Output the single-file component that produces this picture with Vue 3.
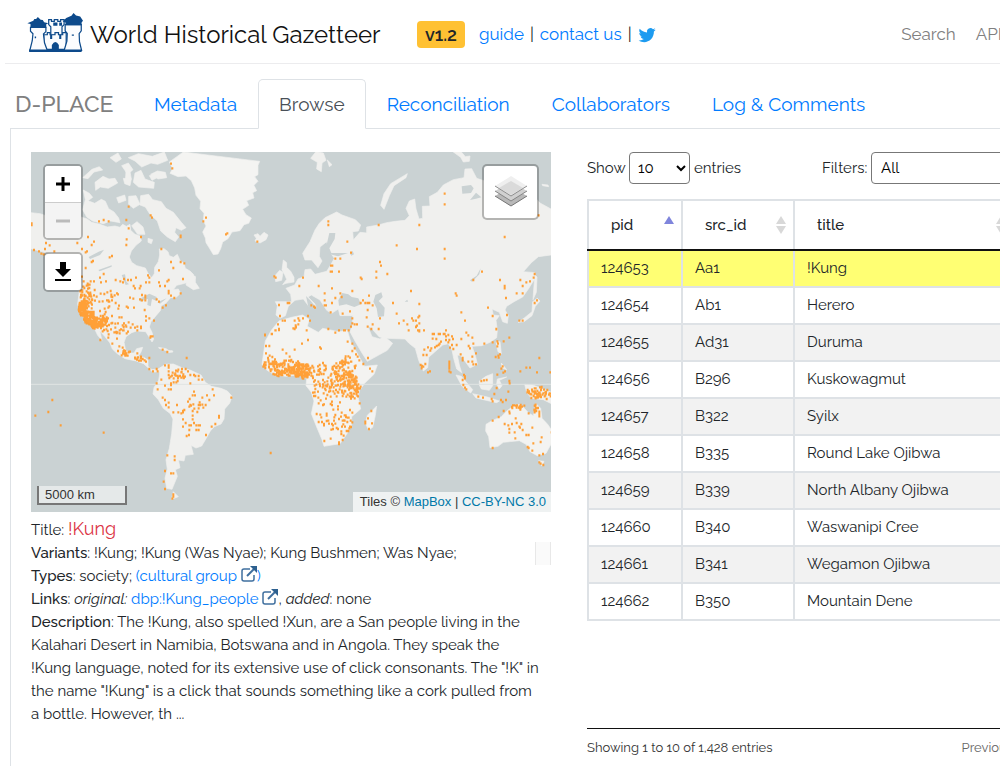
<script setup>
import { ref } from 'vue'

const tabs = ['Metadata', 'Browse', 'Reconciliation', 'Collaborators', 'Log & Comments']
const active = ref('Browse')
const pageSize = ref('10')
const filter = ref('All')
const selected = ref('124653')

const rows = [
  ['124653', 'Aa1', '!Kung'],
  ['124654', 'Ab1', 'Herero'],
  ['124655', 'Ad31', 'Duruma'],
  ['124656', 'B296', 'Kuskowagmut'],
  ['124657', 'B322', 'Syilx'],
  ['124658', 'B335', 'Round Lake Ojibwa'],
  ['124659', 'B339', 'North Albany Ojibwa'],
  ['124660', 'B340', 'Waswanipi Cree'],
  ['124661', 'B341', 'Wegamon Ojibwa'],
  ['124662', 'B350', 'Mountain Dene'],
]

// Places, grouped by map quadrant: [dx, dy, "x,y x,y ..."]
const quadrants = [
  [0, 0, '453,56 457,70 558,218 550,229 622,265 618,268 712,290 326,185 319,225 392,211 396,218 237,229 251,225 266,229 326,250 363,276 482,272 482,276 320,283 319,300 204,276 222,290 215,300 172,294 186,312 201,319 197,322 276,333 269,337 219,348 215,351 424,312 453,351 482,351 493,355 460,369 417,376 489,402 446,405 442,409 384,391 388,398 388,412 378,412 417,412 435,423 420,423 446,438 446,445 482,445 453,452 463,459 410,463 417,470 438,481 428,488 348,398 333,405 324,405 312,402 287,405 309,412 301,409 251,387 240,398 258,409 243,412 222,409 212,409 197,369 186,395 191,409 272,438 294,448 291,445 287,474 276,466 341,423 345,430 359,430 362,423 366,450 376,452 376,458 376,466 360,463 366,466 340,461 330,458 320,485 324,488 342,488 374,495 378,514 388,520 402,527 378,527 363,549 352,545 345,548 338,538 312,535 305,517 298,517 294,535 276,513 78,294 89,301 75,312 42,315 57,319 64,326 103,319 71,328 35,235 35,240 763,394 767,398 777,480 803,474 808,474 838,423 780,513 788,527 795,527 774,538 777,552 767,556 756,567 835,520 838,527 827,541 824,552 735,569'],
  [810, 0, '464,146 464,178 115,229 115,240 266,240 388,240 172,290 183,323 320,301 381,312 464,312 464,341 644,276 746,211 136,341 151,341 270,351 273,362 123,362 127,362 122,380 126,380 147,380 259,380 292,387 259,398 212,398 215,402 576,380 550,405 630,405 39,398 28,423 86,423 126,430 104,445 151,445 155,456 136,459 104,466 126,474 187,438 104,481 108,481 122,502 64,481 72,485 75,488 54,513 60,527 39,520 25,520 28,527 14,527 25,538 18,546 14,552 50,556 115,552 136,563 147,556 162,556 176,556 158,506 180,499 187,520 187,535 194,538 201,538 183,545 237,452 219,466 212,474 226,474 233,474 238,474 248,481 233,495 230,517 233,545 248,538 244,552 266,552 309,474 363,438 388,477 320,506 270,520 341,527 327,535 352,538 366,520 370,527 378,527 385,517 388,513 381,542 378,546 388,535 384,556 402,556 388,559 497,445 500,452 514,502 525,527 468,556 432,567 450,567 464,567 529,563 594,488 608,513 619,552 651,510 648,459 644,423 644,430 698,423 680,445 698,445 691,405 709,412 720,409 731,398 734,387 741,466 734,474 688,527 698,527'],
  [0, 540, '241,45 252,15 266,28 265,38 291,41 277,56 294,78 298,64 308,68 316,78 352,85 388,99 378,110 374,106 363,107 388,132 399,139 410,132 413,139 428,74 442,81 500,99 392,34 398,34 391,38 324,20 320,25 345,8 363,5 352,16 435,121 446,121 446,128 446,139 446,150 424,164 410,175 413,193 446,193 453,193 453,175 453,180 435,182 486,132 497,132 504,139 511,150 511,175 522,150 526,153 536,153 536,164 547,164 578,193 582,211 561,211 547,218 568,225 557,240 522,200 518,211 525,211 511,240 508,245 536,240 540,240 547,239 550,248 536,250 532,261 518,258 518,272 518,283 522,294 513,301 508,301 497,294 489,305 489,283 489,258 489,262 484,265 475,262 460,262 471,240 438,240 446,233 435,225 428,218 446,247 529,301 536,301 540,301 529,315 536,315 508,315 507,330 500,333 558,330 575,305 586,297 597,273 597,278 634,218 442,391 464,394 464,405 435,438 453,445 460,445 431,470 435,492 460,508 460,515 457,521 97,225 85,261 46,272 122,301 251,323 752,384 738,63 748,63 738,85 788,74 799,85 824,74 809,95 777,15 766,16 755,27 735,31 820,10 827,8'],
  [810, 540, '14,12 50,16 54,45 36,56 14,74 90,67 93,71 115,12 136,23 162,16 165,16 187,56 173,50 187,78 194,70 198,88 203,95 208,106 234,99 220,117 240,131 247,139 209,235 208,191 212,185 226,290 226,295 246,295 237,312 234,280 244,258 86,235 80,267 86,291 103,348 122,341 147,352 147,357 158,345 178,310 180,305 170,318 165,305 126,297 115,287 180,255 187,263 356,16 388,16 378,5 403,74 414,67 424,70 421,77 435,67 440,63 410,90 400,90 446,60 453,50 449,56 428,27 428,41 439,42 446,27 461,27 468,34 475,30 486,34 489,42 478,45 468,45 475,52 480,68 486,60 500,60 490,72 478,110 478,117 478,124 478,131 478,139 482,142 392,120 396,123 400,125 395,130 406,117 414,142 420,139 512,88 518,99 518,106 535,110 547,110 550,118 558,118 558,85 547,95 536,63 540,70 529,23 535,31 547,38 550,56 514,42 583,56 608,52 619,13 622,49 624,56 622,64 641,49 658,38 630,88 625,92 626,98 617,96 638,124 634,131 645,139 640,143 622,149 659,175 658,168 620,189 613,207 655,200 748,99 709,128 720,128 691,139 741,142 781,142 522,150 525,154 525,160 518,165 520,180 525,188 529,193 574,168 582,166 590,165 565,215 579,218 605,222 608,229 633,225 638,231 648,225 608,287 626,276 641,258 658,260 659,265 691,254 716,265 748,260 748,267 748,274 608,369 644,297 655,301 658,312 666,297 677,280 680,294 688,305 694,297 698,315 690,308 709,330 716,330 676,340 727,308 755,337 752,351 730,355 713,366 716,369 727,377 748,391 759,387 748,412 752,416 760,420 658,323 674,322 785,322'],
]

// Dense areas: [centre x, centre y, radius x, radius y, count]
const clusters = [
  [188, 492, 13, 24, 80], [207, 518, 16, 20, 80], [232, 530, 28, 22, 70], [200, 450, 20, 38, 50], [245, 485, 55, 55, 50],
  [275, 542, 60, 26, 34], [222, 540, 10, 12, 20], [318, 625, 18, 10, 16], [355, 640, 14, 8, 10], [470, 693, 26, 20, 26], [520, 790, 30, 40, 8],
  [750, 655, 22, 27, 36], [805, 668, 50, 24, 80], [848, 675, 38, 24, 75], [795, 685, 38, 10, 26], [855, 690, 14, 12, 22], [910, 690, 50, 40, 50],
  [976, 680, 34, 48, 70], [985, 720, 30, 40, 65], [1000, 730, 20, 36, 40], [925, 745, 48, 40, 45], [940, 815, 42, 40, 28],
  [970, 840, 28, 34, 16], [1552, 742, 32, 20, 46], [1590, 758, 14, 14, 12], [1494, 786, 22, 8, 18], [1548, 790, 8, 15, 10],
]

let seed = 41
const rnd = () => {
  seed = (seed * 16807) % 2147483647
  return seed / 2147483647
}
const dots = []
for (const [dx, dy, list] of quadrants) {
  for (const p of list.split(' ')) {
    const [x, y] = p.split(',').map(Number)
    dots.push([x + dx, y + dy])
  }
}
for (const [cx, cy, rx, ry, n] of clusters) {
  for (let i = 0; i < n; i++) {
    const a = rnd() * Math.PI * 2
    const r = Math.sqrt(rnd())
    dots.push([Math.round(cx + Math.cos(a) * r * rx), Math.round(cy + Math.sin(a) * r * ry)])
  }
}
const dotPath = dots.map(([x, y]) => `M${x - 3},${y}h6`).join('')
</script>

<template>
  <div class="page">
    <header class="top">
      <svg class="logo" viewBox="0 0 160 120" aria-label="Castle logo">
        <g fill="#fbfcfe" stroke="#0d4a8b" stroke-width="3.500">
          <path d="M62 22h8v5h8v-5h10v5h8v-5h10v14l-6 6v24H68V42l-6-6z" />
          <path d="M48 65h10v-6h8v6h14v-6h10v6h12v-6h10v48H48z" />
          <path d="M10 44h44v12l-7 7 3 25 8 22H8l7-28 2-20-7-7z" />
          <path d="M109 36h46v18l-6 8 1 23 6 25h-50l8-27 1-22-6-7z" />
        </g>
        <g fill="#0d4a8b">
          <path d="M1 32l17-7 3-5h5l5-6 8 8 6 1 4 6 12 3-6 3v11H10V34z" />
          <path d="M102 27l10-10 15-6 6-8 7 7 12 3 8 12-4 5v8h-46v-8z" />
          <path d="M71 110V94q10-16 20 0v16zM75 30h12v9H75zM92 30h8v9h-8zM66 66h6v11h-6zM92 66h6v11h-6zM22 70h4v5h-4zM128 64h6v4h-6zM6 107h150v7H6z" />
        </g>
      </svg>
      <a class="brand" href="#">World Historical Gazetteer</a>
      <span class="version">v1.2</span>
      <div class="links">
        <a href="#">guide</a><span>|</span><a href="#">contact us</a><span>|</span>
        <a href="#" class="tw" aria-label="Twitter">
          <svg viewBox="0 0 24 24"><path fill="#1d9bf0" d="M23.6 4.9c-.8.4-1.7.6-2.7.8 1-.6 1.7-1.5 2.1-2.6-.9.5-1.9.9-3 1.1a4.7 4.7 0 0 0-8 4.3C8.100 8.300 4.700 6.400 2.300 3.600c-1.300 2.200-.6 4.900 1.500 6.300-.8 0-1.500-.2-2.100-.6 0 2.300 1.600 4.200 3.800 4.700-.7.2-1.400.2-2.100.1.600 1.900 2.300 3.200 4.400 3.300A9.500 9.500 0 0 1 .8 19.300c9.300 5.800 20.600-.3 20.400-11.900.9-.7 1.700-1.500 2.400-2.500z" /></svg>
        </a>
      </div>
      <nav class="menu"><a href="#">Search</a><a href="#">API</a></nav>
    </header>

    <div class="tabs">
      <h1>D-PLACE</h1>
      <button v-for="t in tabs" :key="t" type="button" :class="{ on: t === active }" @click="active = t">{{ t }}</button>
    </div>

    <main class="body">
      <section class="left">
        <div class="map">
          <svg class="world" viewBox="33 21 1560 1080" preserveAspectRatio="xMidYMid slice" aria-label="World map">
            <rect x="33" y="21" width="1560" height="1080" fill="#cad2d3" />
            <g fill="#f0f0ee" stroke="#f0f0ee" stroke-width="2" stroke-linejoin="round">
              <!-- North America -->
              <path d="M33 203L60 206 90 216 150 222 180 215 202 222 215 232 240 238 262 246 285 243 300 247 308 238 319 244 330 238 332 256 345 268 362 274 364 288 348 301 334 318 328 336 335 352 350 362 376 369 384 385 395 398 403 386 404 367 415 350 419 330 418 312 432 311 444 320 448 332 460 337 472 328 480 346 492 355 496 370 510 378 520 388 526 400 510 410 490 416 470 421 460 434 475 432 482 445 467 458 452 458 438 474 424 482 421 497 408 512 393 530 388 546 396 562 401 583 396 591 386 574 377 560 350 558 335 563 318 575 312 592 316 612 327 624 342 624 350 611 368 607 363 621 354 635 371 637 384 645 384 664 396 674 414 672 422 668 417 681 398 681 386 670 371 656 349 648 315 641 292 626 277 612 270 594 254 574 239 557 246 586 233 571 225 554 208 535 193 520 180 501 173 478 178 438 186 402 175 374 140 348 103 330 75 322 50 316 33 311z" />
              <!-- Arctic archipelago -->
              <path d="M190 135l18 10 10 12-14 10 20 8 20-12 12 6 10 22 16 10 14 18 4 14-28-5-22 8-32-8-18-12-12-22 8-30zM188 98l28-25 22-8 10 10-26 6-18 20zM225 112l24-18 18 8 18-2 8 14-28 16-24-4-14 10zM270 38l24-14 10 18-16 10zM325 38l30-12 42 8 36-13 10 25-30 12-20-4-28 12-20-18zM305 62l20-8 14 20-16 14zM318 78l12 2 4 22-18 8zM345 84l18-8 12 26 28 10-2 18-45-4-16-14zM388 92l12-4 8 12-12 6zM310 100l24 2-4 20-16-6zM290 158l24-8 4 16-22 8zM326 154l22-2 12 26-20 12-14-12zM362 152l24-4 12 16 26 6 14 20 22 12 24 30 14 16-14 8-16-8-4 14 12 14-10 14-24-14-20-18-10-30-22-20-14-22-16-6zM335 242l16-12 18 16 6 22-22 0zM384 280l14 4-4 12-10-4zM392 88l20 -10 24 4 4 16-26 4zM502 402l24-8 0 18 12 18-18 4-22-14z" />
              <!-- Greenland and Iceland -->
              <path fill="#f4f4f2" d="M490 21l-28 20-14 10 10 20-8 14 24 10 24-2 16 14 10 22 4 22 14 18-2 22 12 14-2 22 8 16-10 18 8 18 2 14 10 16 12 20 14-2 8-16 6-20 16-10 12-20 24-4 12-18 14-4 8-16-16-10-10-16 18-12-6-14 22-8-4-16 12-6-8-16 12-12-10-14 10-6 0-28 5-12z" />
              <path d="M702 270l12-4 6 8 12-12 12 8-6 14-18 10-15-6 4-8z" />
              <!-- British Isles -->
              <path d="M790 345l10 8 0 14 12 12 10 18 0 14-24 4-10 4 12-16-6-14-8-14zM765 392l14-16 10 6-4 24-18 4z" />
              <!-- Caribbean -->
              <path d="M460 1040l15 15-20 8zM416 607l22 4 12 8-3 1-30-10zM443 617l14 0 2 4-16 2z" />
              <!-- South America -->
              <path d="M418 670L436 658 460 657 486 668 512 676 543 690 556 712 574 724 603 730 622 738 636 754 629 775 614 792 612 822 603 837 583 845 571 858 558 881 545 903 528 909 513 901 520 928 496 931 492 948 475 945 480 968 466 974 472 994 456 1033 440 1030 435 999 442 973 438 944 448 910 455 866 459 822 451 806 430 790 415 764 399 747 402 728 416 706 419 687z" />
              <g transform="translate(810 0)">
                <!-- Europe and Asia -->
                <path d="M-42 510L-38 482-44 470-10 470 5 470 2 448-12 430 14 420 24 402 42 395 45 374 62 372 75 388 110 379 122 360 133 340 118 318 110 290 90 306 88 334 96 348 84 368 65 345 45 345 38 325 60 290 75 255 88 235 105 218 140 201 156 210 196 224 212 240 205 258 188 260 190 285 210 262 230 264 230 246 265 240 290 233 316 229 345 226 358 212 348 190 358 168 374 162 378 192 387 222 398 220 397 184 420 183 418 155 442 142 460 120 490 104 522 98 525 72 545 71 560 100 620 120 700 120 750 174 783 192 783 330 745 335 724 353 700 380 735 383 732 405 715 432 698 456 672 470 650 484 645 495 655 512 652 535 638 530 628 502 606 492 610 510 628 512 618 526 622 556 620 578 600 592 575 602 546 604 557 635 562 658 540 669 526 650 512 632 502 630 508 660 515 683 500 672 491 640 486 615 475 596 458 600 435 620 416 637 413 668 400 678 386 646 376 610 356 594 345 582 290 580 268 576 248 554 232 540 246 575 270 582 282 574 308 595 292 616 232 649 216 624 196 590 180 560 188 540 188 512 150 512 145 492 125 505 110 496 90 465 64 450 54 456 82 484 64 494 40 462 15 466-5 484-14 512-30 520z" />
                <!-- Africa and Madagascar -->
                <path fill="#f3f3f1" d="M-32 527L5 517 38 510 58 523 52 544 85 562 98 550 145 560 172 556 182 590 200 622 216 650 224 664 262 660 252 688 224 715 208 737 205 758 212 792 185 815 185 840 170 868 150 896 102 904 96 884 80 846 64 806 72 768 64 742 48 722 50 700 28 689-12 694-46 690-70 675-84 658-80 630-74 588-56 556-40 536zM248 795l12-12-4 28-8 36-12 8-10-20 6-24z" />
                <!-- Arctic islands -->
                <path d="M282 193l-10-12 10-35 20-30 50-30-4 12-36 24-14 30zM62 40l16-20 22 4 8 22-12 8-2 26-14-8 2-20zM490 21l24 0 12 14 14-2-2 16-18 2-8-14zM112 45l14 14-8 6zM756 118l18 2 2 5-18-3z" />
                <!-- Japan, Sakhalin, south-east Asian islands -->
                <path d="M728 470l14-10 8 8-14 16-10 28-24 18-18 2 20-14 22-18zM735 390l6 6-2 46-10 22 2-30zM498 690l16 4 34 40-6 10-26-20zM568 708l20-14 20-8 0 36-10 14-24-4-6-12zM548 746l44 10 36 12-8 5-62-14zM622 702l28-6-22 10 8 16-8 10-8-14zM704 718l24 2 22 8 34 14 0 34-24-12-36-4-14-18zM618 590l12 0 4 36-10-6zM634 654l16 20-14-6z" />
                <!-- Australia -->
                <path fill="#f3f3f1" d="M588 838L606 827 634 815 650 798 672 782 690 778 705 792 716 804 730 812 738 776 752 790 756 820 773 838 784 854 784 896 768 925 742 932 720 920 708 898 688 887 640 892 624 904 600 908 596 875 587 858zM746 947l16 2-6 14z" />
              </g>
            </g>
            <!-- Inland waters -->
            <g fill="#cad2d3">
              <path d="M206 336l30-16 16-6-12 16-30 12zM235 375l40-14 0 4-36 14zM305 390l10-2 4 22 8 8-10 2zM358 462l30-16 22 10 0 12-14-6-4 22-10-4 2-18-24 8zM412 472l28-12-20 16z" />
              <g transform="translate(810 0)">
                <path d="M145 466l12-22 18 4 10 8 20 4 8 18-20 8-24-8-22 4zM256 450l18-8 4 14-12 12 18 20-2 26-18 2-4-26-10-20zM540 406l20-14 12-22-4 18-22 22zM515 124l28-4 8 10-8 14-26 2zM540 165l18-22 16 14-16 4zM118 264l18 0-2 18-16 28 6 14 50 0-30 10-38-10 6-34z" />
                <path d="M48 453l12 12 26 32-12-20 20 12 24 20-12 10-30-2-16-8zM180 326l8-8 4 10-8 4zM344 470l8-6 2 6z" />
              </g>
            </g>
            <path d="M33 718H1593" stroke="#e0e4e3" stroke-width="3" />
            <path :d="dotPath" stroke="#ff9a2c" stroke-width="7" stroke-opacity=".94" fill="none" />
          </svg>
          <div class="ctl">
            <div class="box zoom">
              <button type="button" aria-label="Zoom in"><svg viewBox="0 0 16 16"><path d="M8 1v14M1 8h14" stroke="#000" stroke-width="3" /></svg></button>
              <button type="button" aria-label="Zoom out" disabled><svg viewBox="0 0 16 16"><path d="M1 8h14" stroke="#bbb" stroke-width="3" /></svg></button>
            </div>
            <div class="box">
              <button type="button" aria-label="Download"><svg class="dl" viewBox="0 0 16 20"><path d="M5 0h6v7h5l-8 8-8-8h5zM0 17h16v2H0z" /></svg></button>
            </div>
          </div>
          <button class="box layers" type="button" aria-label="Layers">
            <svg viewBox="0 0 32 32">
              <path d="M0 20l16 10 16-10-16-9z" fill="#b8b8b8" /><path d="M0 20l16 10 16-10" fill="none" stroke="#747474" />
              <path d="M0 15l16 10 16-10-16-9z" fill="#d0d0d0" /><path d="M0 15l16 10 16-10" fill="none" stroke="#858585" />
              <path d="M0 10L16 0l16 10-16 10z" fill="#efefef" /><path d="M4 12l12-7 12 7-12 7z" fill="#dadada" /><path d="M0 10l16 10 16-10" fill="none" stroke="#8c8c8c" />
            </svg>
          </button>
          <div class="scale">5000 km</div>
          <div class="attr">Tiles © <a href="#">MapBox</a> | <a href="#">CC-BY-NC 3.0</a></div>
        </div>

        <div class="detail">
          <p class="title">Title: <span class="red">!Kung</span></p>
          <p class="variants"><span><b>Variants</b>: !Kung; !Kung (Was Nyae); Kung Bushmen; Was Nyae;</span><i class="thumb"></i></p>
          <p><b>Types</b>: society; <a href="#">(cultural group <svg class="ext" viewBox="0 0 16 16"><path d="M9 3H3a2 2 0 0 0-2 2v8a2 2 0 0 0 2 2h8a2 2 0 0 0 2-2V9" /><path d="M6 10l8-8" stroke-width="2" /><path class="tip" d="M9 0h7v7z" /></svg>)</a></p>
          <p><b>Links</b>: <em>original:</em> <a href="#">dbp:!Kung_people <svg class="ext" viewBox="0 0 16 16"><path d="M9 3H3a2 2 0 0 0-2 2v8a2 2 0 0 0 2 2h8a2 2 0 0 0 2-2V9" /><path d="M6 10l8-8" stroke-width="2" /><path class="tip" d="M9 0h7v7z" /></svg></a>, <em>added</em>: none</p>
          <p><b>Description</b>: The !Kung, also spelled !Xun, are a San people living in the<br>Kalahari Desert in Namibia, Botswana and in Angola. They speak the<br>!Kung language, noted for its extensive use of click consonants. The "!K" in<br>the name "!Kung" is a click that sounds something like a cork pulled from<br>a bottle. However, th ...</p>
        </div>
      </section>

      <section class="right">
        <div class="tools">
          <label>Show <select v-model="pageSize" class="size"><option>10</option><option>25</option><option>50</option></select> entries</label>
          <label class="filters">Filters: <select v-model="filter" class="filter"><option>All</option></select></label>
        </div>
        <div class="scroll">
          <table>
            <colgroup><col class="c1"><col class="c2"><col></colgroup>
            <thead>
              <tr>
                <th v-for="(h, i) in ['pid', 'src_id', 'title']" :key="h" scope="col">
                  <div class="head"><span>{{ h }}</span>
                    <svg viewBox="0 0 10 18"><path d="M0 8L5 0l5 8z" :fill="i ? '#d8d8d8' : '#7f85dc'" /><path v-if="i" d="M0 10l5 8 5-8z" fill="#d8d8d8" /></svg>
                  </div>
                </th>
              </tr>
            </thead>
            <tbody>
              <tr v-for="r in rows" :key="r[0]" :class="{ sel: r[0] === selected }" @click="selected = r[0]">
                <td v-for="c in r" :key="c">{{ c }}</td>
              </tr>
            </tbody>
          </table>
        </div>
        <footer class="foot"><span>Showing 1 to 10 of 1,428 entries</span><a href="#">Previous</a></footer>
      </section>
    </main>
  </div>
</template>

<style>
body { margin: 0; background: #fff; overflow: hidden; }
</style>

<style scoped>
* { box-sizing: border-box; }
.page { min-width: 1040px; min-height: 100vh; display: flex; flex-direction: column; font-family: Raleway, Lato, "Open Sans", sans-serif; font-size: 15px; line-height: 23px; color: #212529; }
a { color: #007bff; text-decoration: none; }
button { font: inherit; cursor: pointer; }
p, h1 { margin: 0; }
b { font-weight: 500; }
.top { display: flex; align-items: center; height: 64px; margin-left: 5px; padding: 6px 0 0 22px; border-bottom: 1px solid #ececee; white-space: nowrap; }
.logo { width: 56px; height: 42px; margin-bottom: 4px; }
.brand { width: 290px; margin-left: 7px; font-size: 24px; color: #111; }
.version { margin-left: 37px; padding: 2px 8px; border-radius: 4px; background: #ffc133; font-size: 18px; font-weight: 600; color: #212529; }
.links { display: flex; align-items: center; gap: 6px; margin-left: 14px; font-size: 17px; }
.tw svg { display: block; width: 18px; height: 20px; }
.menu { display: flex; gap: 20px; margin-left: auto; padding-right: 38px; font-size: 17px; }
.menu a { color: #808080; }
.tabs { display: flex; align-items: flex-end; height: 65px; padding-left: 15px; white-space: nowrap; }
.tabs h1 { width: 118px; height: 50px; line-height: 50px; font-size: 23px; font-weight: 500; color: #808080; }
.tabs button { height: 50px; padding: 0 20px; border: 1px solid transparent; border-radius: 5px 5px 0 0; background: transparent; color: #007bff; font-size: 19px; }
.tabs .on { position: relative; border-color: #dee2e6 #dee2e6 #fff; background: #fff; color: #495057; }
.body { display: flex; flex: 1; gap: 36px; margin: -1px 0 0 10px; padding: 23px 0 0 20px; border: solid #dee2e6; border-width: 1px 0 0 1px; }
.left { flex: none; width: 52%; max-width: 520px; }
.map { position: relative; aspect-ratio: 520 / 360; overflow: hidden; }
.world { display: block; width: 100%; height: 100%; }
.ctl { position: absolute; left: 12px; top: 12px; display: grid; gap: 12px; }
.box { border: 2px solid rgba(0, 0, 0, .25); border-radius: 5px; background: #fff; background-clip: padding-box; overflow: hidden; }
.ctl button { display: flex; align-items: center; justify-content: center; width: 36px; height: 36px; padding: 0; border: 0; background: #fff; }
.ctl button:disabled { background: #f4f4f4; border-top: 1px solid #ccc; }
.ctl svg { width: 16px; height: 16px; }
.ctl .dl { height: 20px; }
.layers { position: absolute; top: 12px; right: 12px; width: 57px; height: 56px; padding: 0 11px; }
.layers svg { display: block; width: 32px; height: 32px; }
.scale { position: absolute; left: 6px; bottom: 7px; width: 90px; height: 19px; padding-left: 6px; border: 2px solid #777; border-top: 0; background: rgba(255, 255, 255, .5); font: 13px/18px "Liberation Sans", sans-serif; color: #333; }
.attr { position: absolute; right: 0; bottom: 0; padding: 0 5px 0 7px; background: rgba(255, 255, 255, .7); font: 13px/20px "Liberation Sans", sans-serif; color: #333; }
.attr a { color: #0078a8; }
.detail { padding-top: 5px; white-space: nowrap; }
.detail .title { line-height: 24px; }
.red { font-size: 18px; color: #dc3545; }
.variants { display: flex; justify-content: space-between; }
.thumb { width: 16px; border: solid #e8e8e8; border-width: 0 1px; background: #fafafa; }
.ext { width: 16px; height: 16px; vertical-align: -1px; fill: none; stroke: #3f6f9f; stroke-width: 1.500; overflow: visible; }
.ext .tip { fill: #2d608f; stroke: none; }
.right { flex: 1; min-width: 0; display: flex; flex-direction: column; }
.tools { display: flex; align-items: center; justify-content: space-between; height: 32px; white-space: nowrap; }
.tools select { height: 32px; border: 1px solid #777; border-radius: 4px; background: #fff; font: inherit; color: #000; }
.size { width: 61px; padding: 0 4px; }
.filters { width: 218px; overflow: hidden; }
.filter { width: 180px; padding: 0 5px; }
.scroll { height: 529px; margin-top: 15px; }
table { width: 100%; border-collapse: collapse; table-layout: fixed; }
.c1 { width: 94px; }
.c2 { width: 112px; }
th { height: 50px; padding: 0 7px 0 22px; border: 2px solid #dee2e6; border-bottom: 2px solid #111; font-weight: 500; text-align: left; }
th:last-child { padding-right: 32px; }
.head { display: flex; align-items: center; justify-content: space-between; }
.head svg { width: 10px; height: 18px; }
td { height: 37px; padding: 0 12px; border: 2px solid #dee2e6; white-space: nowrap; }
tbody tr:nth-child(odd) { background: #f2f2f2; }
tbody tr.sel { background: #ffff73; }
.foot { display: flex; justify-content: space-between; padding: 7px 27px 0 0; border-top: 1px solid #111; font-size: 13px; color: #333; }
.foot a { color: #666; }
</style>
